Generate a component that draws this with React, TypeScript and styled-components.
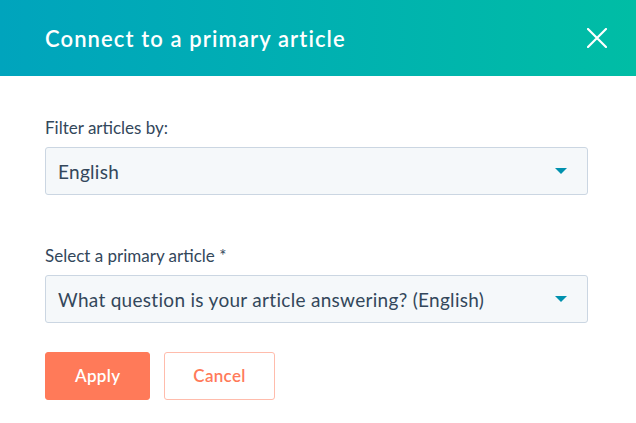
import React from "react";
import styled, { createGlobalStyle } from "styled-components";

const GlobalStyle = createGlobalStyle`
  html, body {
    margin: 0;
    padding: 0;
    background: #ffffff;
  }
  body {
    font-family: "Lato", "Open Sans", sans-serif;
    color: #33475b;
  }
`;

const Dialog = styled.div`
  width: 636px;
  height: 423px;
  background: #ffffff;
  display: flex;
  flex-direction: column;
`;

const Header = styled.header`
  height: 76px;
  box-sizing: border-box;
  padding: 0 29px 0 45px;
  display: flex;
  align-items: center;
  justify-content: space-between;
  background: linear-gradient(90deg, #00a4bd 0%, #00bda5 100%);
`;

const Title = styled.h1`
  margin: 0;
  font-size: 22px;
  font-weight: 600;
  color: #ffffff;
  letter-spacing: 1.1px;
`;

const CloseButton = styled.button`
  width: 20px;
  height: 20px;
  padding: 0;
  border: none;
  background: none;
  display: flex;
  align-items: center;
  justify-content: center;
  cursor: pointer;
`;

const Body = styled.div`
  padding: 42px 48px 0 45px;
  display: flex;
  flex-direction: column;
`;

const Field = styled.div<{ $spacing?: number }>`
  display: flex;
  flex-direction: column;
  margin-bottom: ${(p) => p.$spacing ?? 0}px;
`;

const Label = styled.label`
  font-size: 17px;
  line-height: 20px;
  color: #33475b;
  margin-bottom: 9px;
`;

const Select = styled.div`
  height: 48px;
  box-sizing: border-box;
  border: 1px solid #cbd6e2;
  border-radius: 3px;
  background: #f5f8fa;
  padding: 0 20px 0 12px;
  display: flex;
  align-items: center;
  justify-content: space-between;
  font-size: 19px;
  letter-spacing: 0.3px;
  color: #33475b;
`;

const Caret = styled.span`
  width: 0;
  height: 0;
  border-left: 6.5px solid transparent;
  border-right: 6.5px solid transparent;
  border-top: 6px solid #0091ae;
`;

const Actions = styled.div`
  display: flex;
  gap: 14px;
`;

const Button = styled.button<{ $primary?: boolean }>`
  height: 48px;
  box-sizing: border-box;
  padding: 0 ${(p) => (p.$primary ? 29 : 28)}px 2px;
  border-radius: 3px;
  font-family: "Lato", "Open Sans", sans-serif;
  font-size: 17px;
  letter-spacing: 0.3px;
  font-weight: 600;
  cursor: pointer;
  border: 1px solid ${(p) => (p.$primary ? "#ff7a59" : "#ffbcac")};
  background: ${(p) => (p.$primary ? "#ff7a59" : "#ffffff")};
  color: ${(p) => (p.$primary ? "#ffffff" : "#ff7a59")};
`;

const CloseIcon = () => (
  <svg width="20" height="20" viewBox="0 0 20 20">
    <path d="M1 1 L19 19 M19 1 L1 19" stroke="#ffffff" strokeWidth="2.2" strokeLinecap="round" />
  </svg>
);

export default function App() {
  return (
    <>
      <GlobalStyle />
      <Dialog>
        <Header>
          <Title>Connect to a primary article</Title>
          <CloseButton aria-label="Close">
            <CloseIcon />
          </CloseButton>
        </Header>
        <Body>
          <Field $spacing={51}>
            <Label>Filter articles by:</Label>
            <Select>
              <span>English</span>
              <Caret />
            </Select>
          </Field>
          <Field $spacing={29}>
            <Label>Select a primary article *</Label>
            <Select>
              <span>What question is your article answering? (English)</span>
              <Caret />
            </Select>
          </Field>
          <Actions>
            <Button $primary>Apply</Button>
            <Button>Cancel</Button>
          </Actions>
        </Body>
      </Dialog>
    </>
  );
}
